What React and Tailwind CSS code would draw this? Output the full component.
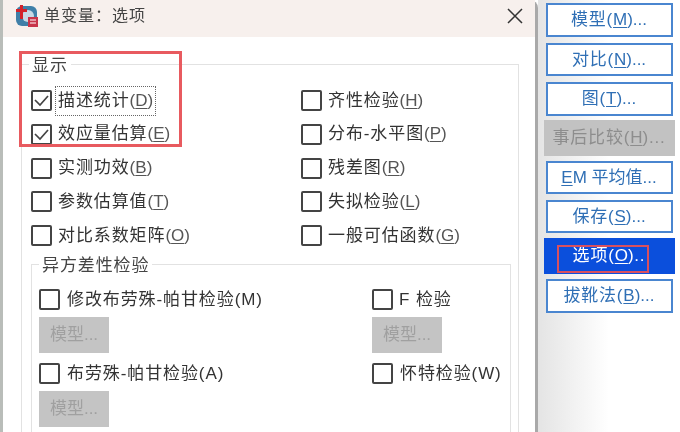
import React from "react";

const font = { fontFamily: '"Liberation Sans", "Noto Sans CJK SC", sans-serif' };

function Box({ checked }) {
  return (
    <span className="w-[21px] h-[21px] shrink-0 border-2 border-[#444] rounded-[2px] bg-white flex items-center justify-center">
      {checked && (
        <svg width="15" height="13" viewBox="0 0 15 13" fill="none">
          <path d="M1 6 L6 11 L14 2" stroke="#444" strokeWidth="1.7" />
        </svg>
      )}
    </span>
  );
}

function Label({ text, k, focus }) {
  return (
    <span className={"flex items-center text-[17px] tracking-[0.9px] leading-[24px] text-[#333] whitespace-nowrap " + (focus ? "outline-1 outline-dotted outline-[#666] outline-offset-[2px]" : "")}>
      {text}
      {k && (
        <span className="text-[#555] tracking-normal">
          (<span className="underline underline-offset-2">{k}</span>)
        </span>
      )}
    </span>
  );
}

function Check({ checked, text, k, focus, gap = "gap-[6px]" }) {
  return (
    <div className={"flex items-center h-[21px] " + gap}>
      <Box checked={checked} />
      <Label text={text} k={k} focus={focus} />
    </div>
  );
}

function ModelBtn() {
  return (
    <div className="w-[70px] h-[36px] bg-[#c4c4c4] text-[#a0a0a0] text-[17px] flex items-center justify-center">
      模型...
    </div>
  );
}

function SideBtn({ text, k, after = ")...", h = "h-[34px]", mt = "" }) {
  return (
    <div className={"w-[127px] " + h + " " + mt + " border-2 border-[#4a86d0] bg-white flex items-center justify-center text-[17px] tracking-[0.8px] text-[#2f6fb5] whitespace-nowrap"}>
      {text}
      <span className="underline underline-offset-2 tracking-normal">{k}</span>
      <span className="tracking-normal">{after}</span>
    </div>
  );
}

const left = [
  [true, "描述统计", "D", true],
  [true, "效应量估算", "E"],
  [false, "实测功效", "B"],
  [false, "参数估算值", "T"],
  [false, "对比系数矩阵", "O"],
];
const right = [
  ["齐性检验", "H"],
  ["分布-水平图", "P"],
  ["残差图", "R"],
  ["失拟检验", "L"],
  ["一般可估函数", "G"],
];

export default function App() {
  return (
    <div style={font} className="relative w-[680px] h-[432px] overflow-hidden flex bg-white blur-[0.4px]">
      <div className="w-[3px] bg-[#b9bdb9]" />
      <div className="w-[535px] flex flex-col border-r-[3px] border-[#a9a9a9] rounded-tr-[8px]">
        <div className="h-[37px] shrink-0 bg-[#f7f0ed] flex items-center pl-[12px] pr-[12px] pb-[5px]">
          <svg width="24" height="24" viewBox="0 0 24 24">
            <rect x="1" y="2" width="21" height="20" rx="6" fill="#3f7fa8" />
            <circle cx="13" cy="12" r="6" fill="#c8d8e4" />
            <rect x="5" y="1" width="3" height="14" fill="#d3222a" />
            <rect x="1" y="5" width="11" height="3" fill="#d3222a" />
            <rect x="13" y="13" width="10" height="10" fill="#c8354a" />
            <path d="M15 16h6M15 19h6" stroke="#fff" strokeWidth="1" />
          </svg>
          <span className="ml-[5px] text-[16px] tracking-[1px] text-[#444]">单变量：选项</span>
          <svg className="ml-auto" width="16" height="16" viewBox="0 0 16 16">
            <path d="M1 1 L15 15 M15 1 L1 15" stroke="#333" strokeWidth="1.5" />
          </svg>
        </div>

        <div className="relative ml-[18px] mt-[27px] w-[498px] flex-1 border border-b-0 border-[#e2e2e2] pl-[9px] pr-[7px] pt-[25px]">
          <span className="absolute left-[7px] top-[-9px] bg-white px-[3px] text-[17px] tracking-[0.9px] leading-[20px] text-[#444]">显示</span>
          <div className="grid grid-cols-[270px_1fr] gap-y-[12.75px]">
            {left.map((l, i) => (
              <React.Fragment key={l[1]}>
                <Check checked={l[0]} text={l[1]} k={l[2]} focus={l[3]} />
                <Check text={right[i][0]} k={right[i][1]} />
              </React.Fragment>
            ))}
          </div>

          <div className="relative mt-[18px] h-[170px] border border-[#e2e2e2] pl-[7px] pt-[24px] flex">
            <span className="absolute left-[7px] top-[-9px] bg-white px-[3px] text-[17px] tracking-[0.9px] leading-[20px] text-[#444]">异方差性检验</span>
            <div className="w-[333px] flex flex-col">
              <Check text="修改布劳殊-帕甘检验(M)" gap="gap-[7px]" />
              <div className="mt-[7px]"><ModelBtn /></div>
              <div className="mt-[10px]"><Check text="布劳殊-帕甘检验(A)" gap="gap-[7px]" /></div>
              <div className="mt-[7px]"><ModelBtn /></div>
            </div>
            <div className="flex flex-col">
              <Check text="F 检验" gap="gap-[6px]" />
              <div className="mt-[7px]"><ModelBtn /></div>
              <div className="mt-[10px]"><Check text="怀特检验(W)" gap="gap-[7px]" /></div>
            </div>
          </div>
        </div>
      </div>

      <div className="flex-1 flex flex-col items-center pt-[3px] bg-gradient-to-r from-[#e4e4e4] via-white to-white">
        <SideBtn text="模型(" k="M" />
        <SideBtn text="对比(" k="N" mt="mt-[6px]" h="h-[33px]" />
        <SideBtn text="图(" k="T" mt="mt-[6px]" />
        <div className="w-[131px] h-[36px] mt-[4px] bg-[#c2c2c2] text-[#8d8d8d] text-[17px] tracking-[0.8px] flex items-center justify-center whitespace-nowrap">
          事后比较(<span className="underline underline-offset-2 tracking-normal">H</span>)...
        </div>
        <SideBtn text="" k="E" after="M 平均值..." mt="mt-[5px]" h="h-[33px]" />
        <SideBtn text="保存(" k="S" mt="mt-[6px]" h="h-[33px]" />
        <div className="w-[131px] h-[36px] mt-[5px] bg-[#0b4fdc] text-white text-[17px] tracking-[0.8px] flex items-center justify-center whitespace-nowrap">
          选项(<span className="underline underline-offset-2 tracking-normal">O</span>)..
        </div>
        <SideBtn text="拔靴法(" k="B" mt="mt-[5px]" />
      </div>

      <div className="absolute left-[19px] top-[51px] w-[163px] h-[96px] border-[3px] border-[#e85a5f]" />
      <div className="absolute left-[557px] top-[245px] w-[92px] h-[28px] border-[2px] border-[#d8505f]" />
    </div>
  );
}
